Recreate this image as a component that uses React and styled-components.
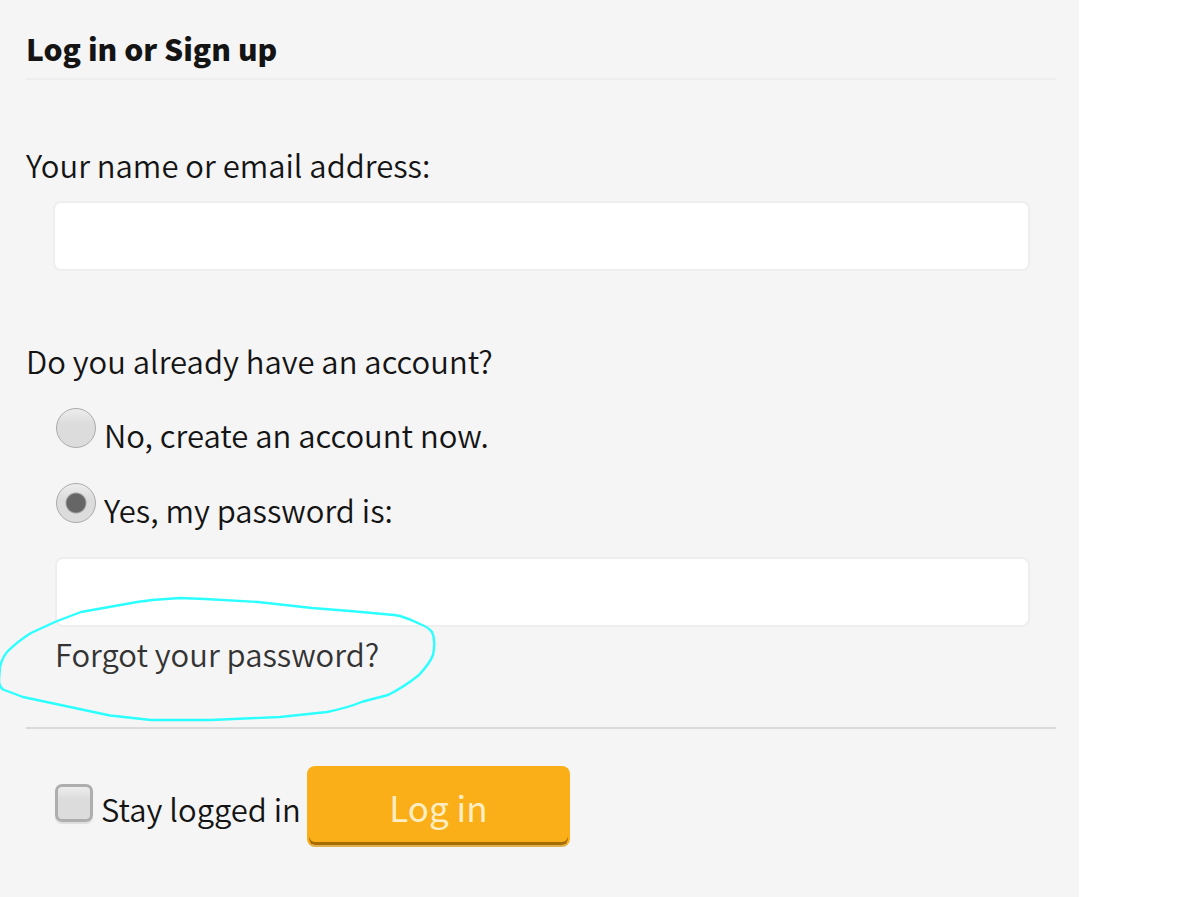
import React, { useState } from 'react';
import styled, { createGlobalStyle } from 'styled-components';


function App() {
  const [name, setName] = useState('');
  const [password, setPassword] = useState('');
  const [hasAccount, setHasAccount] = useState(true);
  const [stay, setStay] = useState(false);

  const handleSubmit = (e) => {
    e.preventDefault();
  };

  return (
    <>
      <GlobalStyle />
      <Panel>
        <Title>Log in or Sign up</Title>
        <form onSubmit={handleSubmit}>
          <Field>
            <Label htmlFor="login">Your name or email address:</Label>
            <NameBox>
              <TextInput
                id="login"
                type="text"
                value={name}
                onChange={(e) => setName(e.target.value)}
              />
            </NameBox>
          </Field>
          <Fieldset>
            <Legend>Do you already have an account?</Legend>
            <Options>
              <Option>
                <Radio
                  type="radio"
                  name="register"
                  checked={!hasAccount}
                  onChange={() => setHasAccount(false)}
                />
                No, create an account now.
              </Option>
              <Option>
                <Radio
                  type="radio"
                  name="register"
                  checked={hasAccount}
                  onChange={() => setHasAccount(true)}
                />
                Yes, my password is:
              </Option>
              <TextInput
                type="password"
                aria-label="Password"
                value={password}
                onChange={(e) => setPassword(e.target.value)}
              />
              <Forgot>
                <ForgotLink href="#forgot">Forgot your password?</ForgotLink>
                <Circle viewBox="0 590 440 136" aria-hidden="true">
                  <path d="M400 616 L394 615 L383 614 L350 611 L312 608 L258 602 L205 599 L180 598 L152 600 L137 602 L81 612 L56 621.500 L31 633 Q18 641 7 652 Q2 658 0 667 L-1 680 Q-1 686 3 689.500 L23 697 L56 704 L110 715.500 L151 720 L211 720 L280 717 L327 712 Q347 708 363 701.500 L388 695 Q404 687 419 675 Q430 663 433 655 Q436 640 432 632 Q428 627 420 624 Q410 619 400 616 Z" />
                </Circle>
              </Forgot>
            </Options>
          </Fieldset>
          <Footer>
            <StayLabel>
              <Checkbox
                type="checkbox"
                checked={stay}
                onChange={(e) => setStay(e.target.checked)}
              />
              Stay logged in
            </StayLabel>
            <LoginButton type="submit">Log in</LoginButton>
          </Footer>
        </form>
      </Panel>
    </>
  );
}

export default App;

const GlobalStyle = createGlobalStyle`
  * {
    box-sizing: border-box;
  }

  body {
    margin: 0;
    background-color: #ffffff;
    color: #141414;
    font-family: "Noto Sans CJK SC", "Noto Sans", sans-serif;
    font-size: 31px;
    font-weight: 350;
    line-height: 40px;
  }
`;

const Panel = styled.main`
  min-height: 100vh;
  margin-right: 121px;
  padding: 28px 23px 50px 26px;
  background-color: #f5f5f5;
`;

const Title = styled.h1`
  margin: 0;
  padding-bottom: 10px;
  border-bottom: 2px solid #eeeeee;
  font-size: 30px;
  font-weight: 900;
`;

const Field = styled.div`
  padding-top: 65px;
`;

const Label = styled.label`
  display: block;
`;

const NameBox = styled.div`
  padding: 16px 26px 0 27px;
`;

const TextInput = styled.input`
  display: block;
  width: 100%;
  height: 70px;
  padding: 0 14px;
  border: 2px solid #eeeeee;
  border-radius: 8px;
  background-color: #ffffff;
  color: inherit;
  font: inherit;
`;

const Fieldset = styled.fieldset`
  margin: 0;
  padding: 70px 0 0;
  border: none;
  min-width: 0;
`;

const Legend = styled.legend`
  float: left;
  width: 100%;
  padding: 0;
`;

const Options = styled.div`
  clear: both;
  padding: 26px 26px 0 29px;
`;

const Option = styled.label`
  display: flex;
  align-items: baseline;
  gap: 8px;
  height: 75px;
  padding: 1px 1px 0;
`;

const Radio = styled.input`
  appearance: none;
  flex: none;
  width: 40px;
  height: 40px;
  margin: 0 0 1px;
  border: 1px solid #aaaaaa;
  border-radius: 50%;
  background: ${(props) =>
    props.checked
      ? 'radial-gradient(circle, #666666 9px, transparent 11px), linear-gradient(#ededed, #dcdcdc 38%)'
      : 'linear-gradient(#ededed, #dcdcdc 38%)'};
`;

const Forgot = styled.div`
  position: relative;
  padding-top: 7px;
`;

const ForgotLink = styled.a`
  color: #333333;
  text-decoration: none;
`;

/* hand-drawn ring lying over the link and the password box */
const Circle = styled.svg`
  position: absolute;
  top: -37px;
  left: -55px;
  width: 440px;
  height: 136px;
  pointer-events: none;

  path {
    fill: none;
    stroke: #2cffff;
    stroke-width: 2.4;
    stroke-linejoin: round;
  }
`;

const Footer = styled.div`
  display: flex;
  align-items: baseline;
  gap: 6px;
  margin-top: 53px;
  padding: 37px 29px 0;
  border-top: 2px solid #dadada;
`;

const StayLabel = styled.label`
  display: flex;
  align-items: baseline;
  gap: 8px;
`;

const Checkbox = styled.input`
  appearance: none;
  flex: none;
  width: 38px;
  height: 38px;
  margin: 0 0 3px;
  border: 3px solid #aeaeae;
  border-radius: 7px;
  background: ${(props) => (props.checked ? '#888888' : 'linear-gradient(#ededed, #dcdcdc 38%)')};
  box-shadow: 0 2px 1px #dedede;
`;

const LoginButton = styled.button`
  width: 263px;
  height: 81px;
  padding: 0;
  border: 2px solid #faaf18;
  border-bottom-color: #e0b04a;
  border-radius: 8px;
  background-color: #faaf18;
  box-shadow: inset 0 -3px 0 #a66c06;
  color: #ffedc4;
  font: inherit;
  font-size: 35px;
  font-weight: 400;
  cursor: pointer;
`;
